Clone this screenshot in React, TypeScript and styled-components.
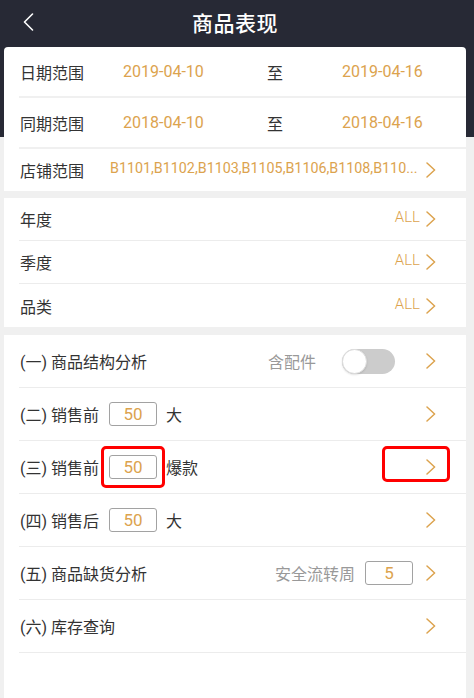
import React from "react";
import styled, { createGlobalStyle } from "styled-components";

const GlobalStyle = createGlobalStyle`
  html, body { margin: 0; padding: 0; background: #f0f0f0; }
  body { font-family: Roboto, "Noto Sans CJK SC", sans-serif; -webkit-font-smoothing: antialiased; }
  * { box-sizing: border-box; }
`;

const ORANGE = "#dca34e";

const Page = styled.div`
  min-height: 698px;
  width: 474px;
  padding: 0 8px 0 4px;
  display: flex;
  flex-direction: column;
  background: linear-gradient(to bottom, #272935 0, #272935 137px, #f0f0f0 137px);
`;

const Header = styled.header`
  height: 47px;
  display: grid;
  grid-template-columns: 1fr auto 1fr;
  align-items: center;
`;

const BackButton = styled.div`
  display: flex;
  align-items: center;
  padding-left: 19px;
  padding-bottom: 3px;
`;

const Title = styled.h1`
  margin: 0;
  padding-bottom: 3px;
  color: #ffffff;
  font-family: "Noto Sans CJK SC", sans-serif;
  font-size: 21px;
  font-weight: 500;
  letter-spacing: 0.5px;
`;

const Card = styled.section<{ $rounded?: boolean; $fill?: boolean; $gap?: number }>`
  background: #ffffff;
  border-radius: ${(p) => (p.$rounded ? "4px 4px 0 0" : "0")};
  margin-top: ${(p) => p.$gap ?? 0}px;
  flex: ${(p) => (p.$fill ? "1" : "none")};
  display: flex;
  flex-direction: column;
`;

const Row = styled.div<{ $h: number; $border?: number; $color?: string }>`
  height: ${(p) => p.$h}px;
  margin-left: 15px;
  padding: 0 30px 0 1px;
  display: flex;
  align-items: center;
  border-bottom: ${(p) => p.$border ?? 0}px solid ${(p) => p.$color ?? "#ececec"};
  font-size: 16px;
  color: #333333;
`;

const Label = styled.span<{ $w?: number }>`
  font-family: Roboto, "Noto Sans CJK SC", sans-serif;
  font-size: 16px;
  color: #333333;
  white-space: nowrap;
  width: ${(p) => (p.$w ? `${p.$w}px` : "auto")};
  flex: none;
`;

const DateValue = styled.span<{ $w?: number }>`
  font-family: Roboto, sans-serif;
  font-size: 16px;
  color: ${ORANGE};
  width: ${(p) => (p.$w ? `${p.$w}px` : "auto")};
  flex: none;
`;

const ToText = styled.span`
  font-family: "Noto Sans CJK SC", sans-serif;
  font-size: 16px;
  color: #333333;
  width: 75px;
  flex: none;
`;

const StoreList = styled.span`
  font-family: Roboto, sans-serif;
  font-size: 14.3px;
  color: ${ORANGE};
  white-space: nowrap;
  width: 313px;
  margin-left: 6px;
  margin-right: 4px;
  padding-bottom: 5px;
`;

const Spacer = styled.div`
  flex: 1;
`;

const AllValue = styled.span`
  font-family: Roboto, sans-serif;
  font-size: 15px;
  font-weight: 300;
  color: ${ORANGE};
  margin-right: 6px;
  padding-bottom: 4px;
`;

const Hint = styled.span<{ $mr: number }>`
  font-family: "Noto Sans CJK SC", sans-serif;
  font-size: 16px;
  color: #999999;
  margin-right: ${(p) => p.$mr}px;
`;

const NumBox = styled.div<{ $ml?: number; $mr?: number }>`
  width: 48px;
  height: 24px;
  border: 1px solid #a2a2a2;
  border-radius: 3px;
  display: flex;
  align-items: center;
  justify-content: center;
  font-family: Roboto, sans-serif;
  font-size: 17px;
  color: ${ORANGE};
  margin-left: ${(p) => p.$ml ?? 0}px;
  margin-right: ${(p) => p.$mr ?? 0}px;
`;

const Unit = styled.span`
  font-family: "Noto Sans CJK SC", sans-serif;
  font-size: 16px;
  color: #333333;
`;

const Highlight = styled.div<{ $t: number; $r: number; $b: number; $l: number; $ml?: number; $mr?: number }>`
  position: relative;
  display: flex;
  margin-left: ${(p) => p.$ml ?? 0}px;
  margin-right: ${(p) => p.$mr ?? 0}px;
  &::after {
    content: "";
    position: absolute;
    top: ${(p) => -p.$t}px;
    right: ${(p) => -p.$r}px;
    bottom: ${(p) => -p.$b}px;
    left: ${(p) => -p.$l}px;
    border: 3px solid #ff0000;
    border-radius: 5px;
    pointer-events: none;
  }
`;

const Toggle = styled.div`
  width: 53px;
  height: 25px;
  border-radius: 13px;
  background: #cccccc;
  position: relative;
  margin-right: 31px;
  flex: none;
`;

const Knob = styled.div`
  position: absolute;
  left: 0;
  top: 0;
  width: 25px;
  height: 25px;
  border-radius: 50%;
  background: #ffffff;
  border: 1px solid #dddddd;
  box-shadow: 0 1px 2px rgba(0, 0, 0, 0.12);
`;

const ChevronWrap = styled.span`
  display: flex;
  width: 10px;
  height: 16px;
  flex: none;
`;

const Chevron = () => (
  <ChevronWrap>
    <svg width="10" height="16" viewBox="0 0 10 16">
      <path d="M1 1 L8.6 8 L1 15" fill="none" stroke={ORANGE} strokeWidth="1.5" strokeLinecap="round" strokeLinejoin="round" />
    </svg>
  </ChevronWrap>
);

const BackIcon = () => (
  <svg width="11" height="18" viewBox="0 0 11 18">
    <path d="M9.5 1 L1.5 9 L9.5 17" fill="none" stroke="#ffffff" strokeWidth="1.6" strokeLinecap="round" strokeLinejoin="round" />
  </svg>
);

const filters = ["年度", "季度", "品类"];

export default function App() {
  return (
    <>
      <GlobalStyle />
      <Page>
        <Header>
          <BackButton>
            <BackIcon />
          </BackButton>
          <Title>商品表现</Title>
          <div />
        </Header>

        <Card $rounded>
          <Row $h={51} $border={2} $color="#f0f0f0">
            <Label $w={103}>日期范围</Label>
            <DateValue $w={144}>2019-04-10</DateValue>
            <ToText>至</ToText>
            <DateValue>2019-04-16</DateValue>
          </Row>
          <Row $h={51} $border={2} $color="#f0f0f0">
            <Label $w={103}>同期范围</Label>
            <DateValue $w={144}>2018-04-10</DateValue>
            <ToText>至</ToText>
            <DateValue>2018-04-16</DateValue>
          </Row>
          <Row $h={42}>
            <Label $w={84}>店铺范围</Label>
            <StoreList>B1101,B1102,B1103,B1105,B1106,B1108,B110...</StoreList>
            <Chevron />
          </Row>
        </Card>

        <Card $gap={7}>
          {filters.map((f, i) => (
            <Row key={f} $h={43} $border={i < filters.length - 1 ? 1 : 0}>
              <Label>{f}</Label>
              <Spacer />
              <AllValue>ALL</AllValue>
              <Chevron />
            </Row>
          ))}
        </Card>

        <Card $gap={8} $fill>
          <Row $h={53} $border={1}>
            <Label>(一) 商品结构分析</Label>
            <Spacer />
            <Hint $mr={26}>含配件</Hint>
            <Toggle>
              <Knob />
            </Toggle>
            <Chevron />
          </Row>
          <Row $h={53} $border={1}>
            <Label>(二) 销售前</Label>
            <NumBox $ml={10} $mr={9}>50</NumBox>
            <Unit>大</Unit>
            <Spacer />
            <Chevron />
          </Row>
          <Row $h={53} $border={1}>
            <Label>(三) 销售前</Label>
            <Highlight $t={9} $r={8} $b={9} $l={8} $ml={10} $mr={9}>
              <NumBox>50</NumBox>
            </Highlight>
            <Unit>爆款</Unit>
            <Spacer />
            <Highlight $t={13} $r={14} $b={7} $l={44}>
              <Chevron />
            </Highlight>
          </Row>
          <Row $h={53} $border={1}>
            <Label>(四) 销售后</Label>
            <NumBox $ml={10} $mr={9}>50</NumBox>
            <Unit>大</Unit>
            <Spacer />
            <Chevron />
          </Row>
          <Row $h={53} $border={1}>
            <Label>(五) 商品缺货分析</Label>
            <Spacer />
            <Hint $mr={10}>安全流转周</Hint>
            <NumBox $mr={13}>5</NumBox>
            <Chevron />
          </Row>
          <Row $h={53} $border={1}>
            <Label>(六) 库存查询</Label>
            <Spacer />
            <Chevron />
          </Row>
        </Card>
      </Page>
    </>
  );
}
